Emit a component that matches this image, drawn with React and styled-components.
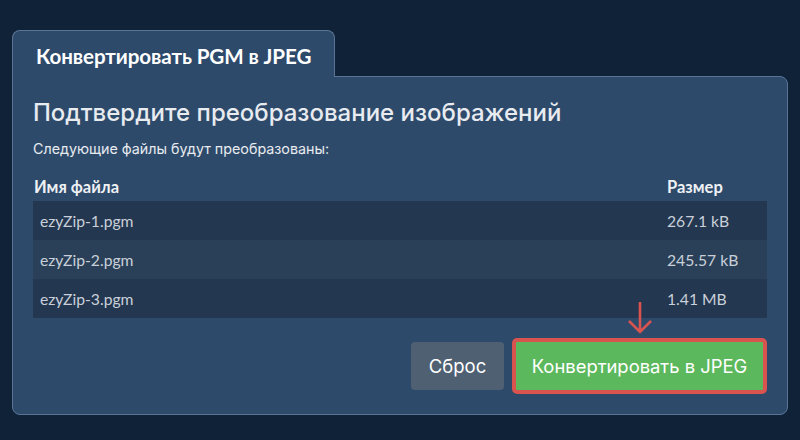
import styled, { createGlobalStyle } from "styled-components";

const GlobalStyle = createGlobalStyle`
    html, body {
        margin: 0;
        padding: 0;
        background-color: #0f2238;
    }
    * {
        box-sizing: border-box;
    }
`;

const files = [
    { name: "ezyZip-1.pgm", size: "267.1 kB" },
    { name: "ezyZip-2.pgm", size: "245.57 kB" },
    { name: "ezyZip-3.pgm", size: "1.41 MB" },
];

const App = () => {
    return (
        <>
            <GlobalStyle />
            <Page>
                <Tab>Конвертировать PGM в JPEG</Tab>
                <Panel>
                    <Heading>Подтвердите преобразование изображений</Heading>
                    <Subtitle>Следующие файлы будут преобразованы:</Subtitle>
                    <Table>
                        <thead>
                            <tr>
                                <HeadCell>Имя файла</HeadCell>
                                <HeadCell $size>Размер</HeadCell>
                            </tr>
                        </thead>
                        <tbody>
                            {files.map((f, i) => (
                                <Row key={f.name} $odd={i % 2 === 1}>
                                    <Cell>{f.name}</Cell>
                                    <Cell $size>{f.size}</Cell>
                                </Row>
                            ))}
                        </tbody>
                    </Table>
                    <Actions>
                        <ResetButton>Сброс</ResetButton>
                        <ConvertWrap>
                            <Arrow width="26" height="34" viewBox="0 0 26 34">
                                <path
                                    d="M13 1 V31 M2 20 L13 31 L24 20"
                                    fill="none"
                                    stroke="#d9534f"
                                    strokeWidth="2.6"
                                />
                            </Arrow>
                            <ConvertButton>Конвертировать в JPEG</ConvertButton>
                        </ConvertWrap>
                    </Actions>
                </Panel>
            </Page>
        </>
    );
};

const Page = styled.div`
    display: flex;
    flex-direction: column;
    align-items: flex-start;
    padding: 30px 12px 25px 12px;
`;
const Tab = styled.div`
    display: flex;
    align-items: center;
    width: 323px;
    height: 47px;
    padding: 3px 0 0 23px;
    margin-bottom: -1px;
    position: relative;
    z-index: 1;
    background-color: #2d4a6b;
    border: 1px solid #5a7594;
    border-bottom: none;
    border-radius: 8px 8px 0 0;
    font-family: Lato, "Open Sans", sans-serif;
    font-weight: 700;
    font-size: 20.6px;
    letter-spacing: -0.1px;
    color: #ffffff;
`;
const Panel = styled.div`
    display: flex;
    flex-direction: column;
    width: 776px;
    padding: 20px 20px 20px 20px;
    background-color: #2d4a6b;
    border: 1px solid #5a7594;
    border-radius: 0 8px 8px 8px;
`;
const Heading = styled.div`
    font-family: Inter, "Noto Sans", sans-serif;
    font-size: 24px;
    font-weight: 500;
    line-height: 32px;
    color: #e8ebef;
`;
const Subtitle = styled.div`
    margin-top: 10px;
    font-family: Inter, "Noto Sans", sans-serif;
    font-size: 14.3px;
    line-height: 20px;
    color: #e8ebef;
`;
const Table = styled.table`
    width: 100%;
    margin-top: 18px;
    border-collapse: collapse;
    font-family: Lato, "Open Sans", sans-serif;
    font-size: 15.7px;
`;
const HeadCell = styled.th`
    text-align: left;
    height: 24px;
    padding: 0 0 4px ${(p) => (p.$size ? "0" : "1px")};
    width: ${(p) => (p.$size ? "100px" : "auto")};
    font-size: 16.5px;
    font-weight: 700;
    color: #eef1f4;
`;
const Row = styled.tr`
    height: 39px;
    background-color: ${(p) => (p.$odd ? "#2a4058" : "#243750")};
`;
const Cell = styled.td`
    padding: 0 0 0 ${(p) => (p.$size ? "0" : "7px")};
    color: #c9d0d9;
`;
const Actions = styled.div`
    display: flex;
    justify-content: flex-end;
    align-items: center;
    gap: 8px;
    margin-top: 20px;
`;
const ResetButton = styled.div`
    display: flex;
    align-items: center;
    justify-content: center;
    width: 93px;
    height: 48px;
    border-radius: 4px;
    background-color: #4f6073;
    font-family: Inter, "Noto Sans", sans-serif;
    font-size: 18.5px;
    color: #ffffff;
`;
const ConvertWrap = styled.div`
    position: relative;
`;
const Arrow = styled.svg`
    position: absolute;
    top: -37px;
    left: 50%;
    transform: translateX(-50%);
`;
const ConvertButton = styled.div`
    display: flex;
    align-items: center;
    justify-content: center;
    width: 255px;
    height: 56px;
    border: 4px solid #d9534f;
    border-radius: 5px;
    background-color: #5cb85c;
    font-family: Inter, "Noto Sans", sans-serif;
    font-size: 18.4px;
    color: #ffffff;
`;

export default App;
